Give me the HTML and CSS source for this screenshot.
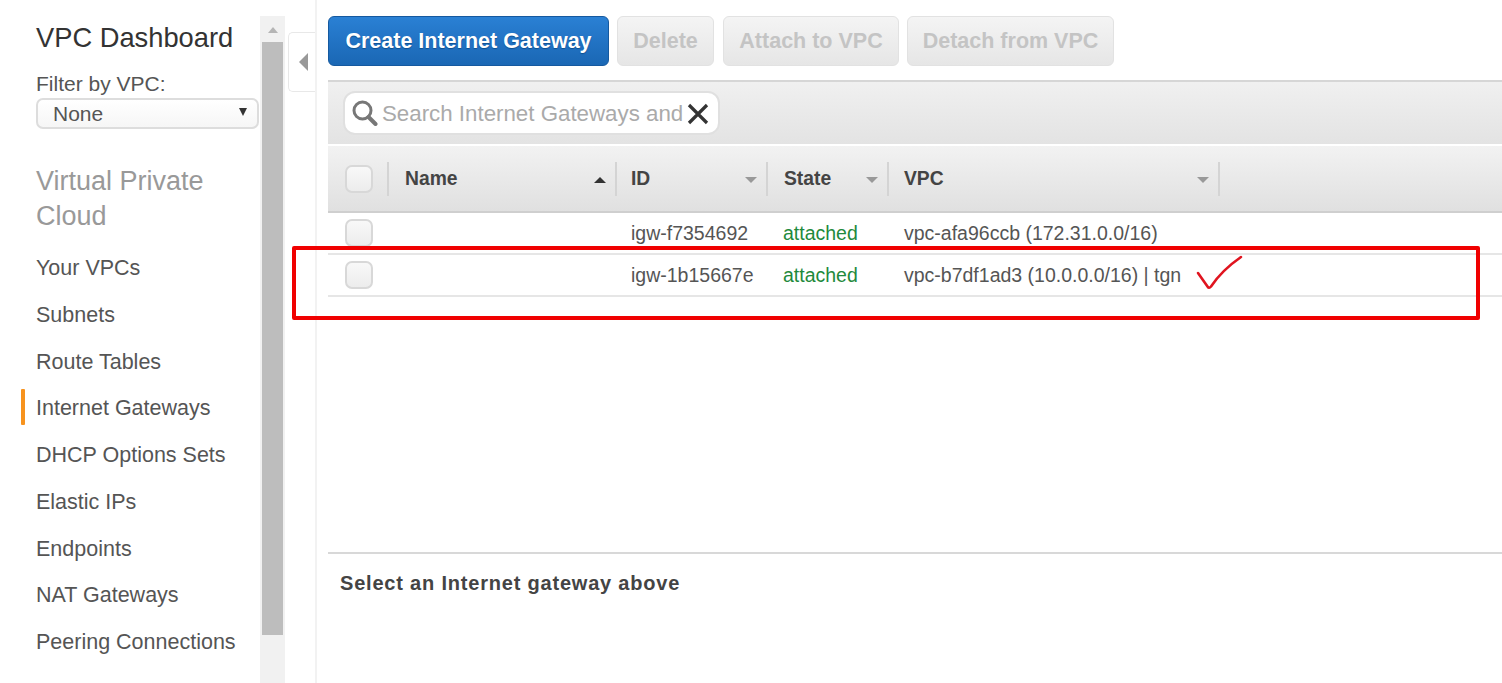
FILE: index.html
```html
<!DOCTYPE html>
<html lang="en">
<head>
    <meta charset="UTF-8">
    <title>Internet Gateways</title>
    <link rel="stylesheet" href="styles.css">
</head>
<body>
    <aside class="sidebar">
        <h2 class="dash-title">VPC Dashboard</h2>
        <label class="filter-label">Filter by VPC:</label>
        <div class="filter-select"><span>None</span><i class="select-arrow"></i></div>
        <h3 class="nav-title">Virtual Private Cloud</h3>
        <ul class="nav">
            <li>Your VPCs</li>
            <li>Subnets</li>
            <li>Route Tables</li>
            <li class="active">Internet Gateways</li>
            <li>DHCP Options Sets</li>
            <li>Elastic IPs</li>
            <li>Endpoints</li>
            <li>NAT Gateways</li>
            <li>Peering Connections</li>
        </ul>
    </aside>
    <div class="scrollbar">
        <div class="scroll-up"><i></i></div>
        <div class="scroll-thumb"></div>
    </div>
    <div class="collapse">
        <div class="collapse-tab"><i></i></div>
    </div>
    <main class="content">
        <div class="actions">
            <button class="btn btn-primary btn-create">Create Internet Gateway</button>
            <button class="btn btn-delete">Delete</button>
            <button class="btn btn-attach">Attach to VPC</button>
            <button class="btn btn-detach">Detach from VPC</button>
        </div>
        <div class="toolbar">
            <div class="search">
                <svg class="search-icon" width="26" height="26" viewBox="0 0 26 26">
                    <circle cx="10.5" cy="10.5" r="8.5" fill="none" stroke="#777" stroke-width="3"/>
                    <path d="M16.5 17l7 7" stroke="#777" stroke-width="4" stroke-linecap="round"/>
                </svg>
                <span class="search-text">Search Internet Gateways and</span>
                <svg class="search-clear" width="22" height="22" viewBox="0 0 22 22">
                    <path d="M2 2l18 18M20 2L2 20" stroke="#333" stroke-width="3.2"/>
                </svg>
            </div>
        </div>
        <div class="table-head">
            <div class="col col-check"><span class="check"></span></div>
            <div class="col col-name head-cell">Name<i class="sort sort-up"></i></div>
            <div class="col col-id head-cell">ID<i class="sort"></i></div>
            <div class="col col-state head-cell">State<i class="sort"></i></div>
            <div class="col col-vpc head-cell">VPC<i class="sort"></i></div>
        </div>
        <div class="table-row">
            <div class="col col-check"><span class="check"></span></div>
            <div class="col col-name"></div>
            <div class="col col-id">igw-f7354692</div>
            <div class="col col-state attached">attached</div>
            <div class="col col-vpc">vpc-afa96ccb (172.31.0.0/16)</div>
        </div>
        <div class="table-row">
            <div class="col col-check"><span class="check"></span></div>
            <div class="col col-name"></div>
            <div class="col col-id">igw-1b15667e</div>
            <div class="col col-state attached">attached</div>
            <div class="col col-vpc">vpc-b7df1ad3 (10.0.0.0/16) | tgn</div>
        </div>
        <div class="table-space"></div>
        <div class="details">Select an Internet gateway above</div>
    </main>

    <!-- red annotation drawn on top of the screenshot -->
    <div class="mark-box"></div>
    <svg class="mark-check" width="48" height="38" viewBox="0 0 48 38">
        <path d="M2 18L11.5 31.5Q13 34 15 31.5C22 21 32 11 45 2" fill="none" stroke="#e0141f" stroke-width="2.6" stroke-linecap="round" stroke-linejoin="round"/>
    </svg>
</body>
</html>
```

FILE: styles.css
```css
html, body {
    height: 683px;
}

body {
    margin: 0;
    display: flex;
    overflow: hidden;
    position: relative;
    background-color: #fff;
    font-family: "Liberation Sans", Arial, sans-serif;
    font-size: 20px;
    color: #555;
}

/* left nav */
.sidebar {
    width: 224px;
    flex: none;
    padding: 22px 0 0 36px;
}

.dash-title {
    margin: 0;
    font-size: 27.3px;
    line-height: 32px;
    font-weight: normal;
    color: #333;
}

.filter-label {
    display: block;
    margin-top: 17px;
    font-size: 21px;
    line-height: 26px;
    color: #555;
}

.filter-select {
    width: 223px;
    height: 31px;
    margin-top: 1px;
    display: flex;
    align-items: center;
    justify-content: space-between;
    box-sizing: border-box;
    padding: 0 10px 0 15px;
    border: 2px solid #ddd;
    border-radius: 7px;
    background: linear-gradient(#fff, #f6f6f6);
    font-size: 21px;
}

.select-arrow {
    width: 0;
    height: 0;
    margin-bottom: 4px;
    border-left: 4px solid transparent;
    border-right: 4px solid transparent;
    border-top: 8px solid #333;
}

.nav-title {
    margin: 35px 0 0;
    width: 200px;
    font-size: 27px;
    line-height: 35px;
    font-weight: normal;
    color: #999;
}

.nav {
    list-style: none;
    margin: 15px 0 0;
    padding: 0;
}

.nav li {
    position: relative;
    height: 46.75px;
    line-height: 38px;
    font-size: 21.5px;
    color: #555;
    white-space: nowrap;
}

.nav li.active::before {
    content: "";
    position: absolute;
    left: -15px;
    top: 0;
    width: 4px;
    height: 36px;
    border-radius: 1px;
    background-color: #f7931e;
}

/* scrollbar */
.scrollbar {
    width: 25px;
    flex: none;
    margin-top: 16px;
    background-color: #f1f1f1;
}

.scroll-up {
    height: 26px;
    display: flex;
    justify-content: center;
    padding-top: 11px;
    box-sizing: border-box;
}

.scroll-up i {
    width: 0;
    height: 0;
    border-left: 5px solid transparent;
    border-right: 5px solid transparent;
    border-bottom: 6px solid #b5b5b5;
}

.scroll-thumb {
    width: 21px;
    height: 593px;
    margin-left: 2px;
    background-color: #bdbdbd;
}

/* collapse tab */
.collapse {
    width: 32px;
    flex: none;
    box-sizing: border-box;
    border-right: 2px solid #f2f2f2;
    padding: 32px 0 0 3px;
}

.collapse-tab {
    height: 60px;
    display: flex;
    align-items: center;
    box-sizing: border-box;
    padding-left: 10px;
    border: 1px solid #e8e8e8;
    border-right: none;
    border-radius: 5px 0 0 5px;
}

.collapse-tab i {
    width: 0;
    height: 0;
    border-top: 9px solid transparent;
    border-bottom: 9px solid transparent;
    border-right: 9px solid #999;
}

/* main area */
.content {
    flex: 1;
    min-width: 0;
    margin-left: 11px;
    padding-top: 16px;
}

.actions {
    display: flex;
    height: 50px;
}

.btn {
    height: 50px;
    padding: 0;
    box-sizing: border-box;
    border: 1px solid #e2e2e2;
    border-radius: 6px;
    background: linear-gradient(#f4f4f4, #e6e6e6);
    font-family: inherit;
    font-size: 21.5px;
    font-weight: bold;
    color: #c4c4c4;
}

.btn-primary {
    border-color: #15599f;
    background: linear-gradient(#2a80d4, #1a67b4);
    color: #fff;
    text-shadow: 0 1px 1px #0f4f8f;
}

.btn-create { width: 281px; }
.btn-delete { width: 97px; margin-left: 8px; }
.btn-attach { width: 176px; margin-left: 9px; }
.btn-detach { width: 207px; margin-left: 8px; }

.toolbar {
    height: 64px;
    margin-top: 14px;
    box-sizing: border-box;
    padding: 9px 0 0 15px;
    border-top: 2px solid #d6d6d6;
    background: linear-gradient(#f0f0f0, #e3e3e3);
}

.search {
    width: 377px;
    height: 44px;
    display: flex;
    align-items: center;
    box-sizing: border-box;
    padding-left: 7px;
    border: 2px solid #e0e0e0;
    border-radius: 12px;
    background-color: #fff;
}

.search-icon {
    flex: none;
}

.search-text {
    margin: 2px 0 0 4px;
    font-size: 22.3px;
    color: #aaa;
    white-space: nowrap;
}

.search-clear {
    flex: none;
    margin: 1px 0 0 4px;
}

.table-head {
    height: 67px;
    margin-top: 2px;
    display: flex;
    align-items: center;
    box-sizing: border-box;
    border-bottom: 2px solid #cfcfcf;
    background: linear-gradient(#f2f2f2, #e0e0e0);
}

.table-head .col {
    height: 34px;
    line-height: 34px;
}

.table-row {
    height: 42px;
    display: flex;
    align-items: center;
    box-sizing: border-box;
    border-bottom: 2px solid #e6e6e6;
    font-size: 19.5px;
}

.col {
    box-sizing: border-box;
    flex: none;
    white-space: nowrap;
}

.col-check { width: 61px; padding-left: 17px; display: flex; align-items: center; }
.col-name { width: 228px; padding-left: 16px; }
.col-id { width: 151px; padding-left: 14px; }
.col-state { width: 121px; padding-left: 16px; }
.col-vpc { width: 331px; padding-left: 15px; }

.head-cell {
    position: relative;
    font-size: 19.3px;
    font-weight: bold;
    color: #444;
    border-right: 2px solid #d4d4d4;
}

.table-head .col-check {
    border-right: 2px solid #d4d4d4;
}

.check {
    width: 28px;
    height: 28px;
    box-sizing: border-box;
    border: 2px solid #d8d8d8;
    border-radius: 7px;
    background: linear-gradient(#f8f8f8, #ececec);
}

.sort {
    position: absolute;
    right: 9px;
    top: 15px;
    width: 0;
    height: 0;
    border-left: 6px solid transparent;
    border-right: 6px solid transparent;
    border-top: 6px solid #999;
}

.sort-up {
    border-top: none;
    border-bottom: 6px solid #333;
}

.attached {
    padding-left: 15px;
    color: #1f8a3c;
}

.table-space {
    height: 257px;
    box-sizing: border-box;
    border-bottom: 2px solid #d8d8d8;
}

.details {
    padding: 17px 0 0 12px;
    font-size: 20px;
    line-height: 24px;
    font-weight: bold;
    letter-spacing: 0.8px;
    color: #444;
}

/* annotation */
.mark-box {
    position: absolute;
    left: 292px;
    top: 246px;
    width: 1188px;
    height: 74px;
    box-sizing: border-box;
    border: 4px solid #f00000;
    border-radius: 2px;
}

.mark-check {
    position: absolute;
    left: 1196px;
    top: 255px;
}
```
